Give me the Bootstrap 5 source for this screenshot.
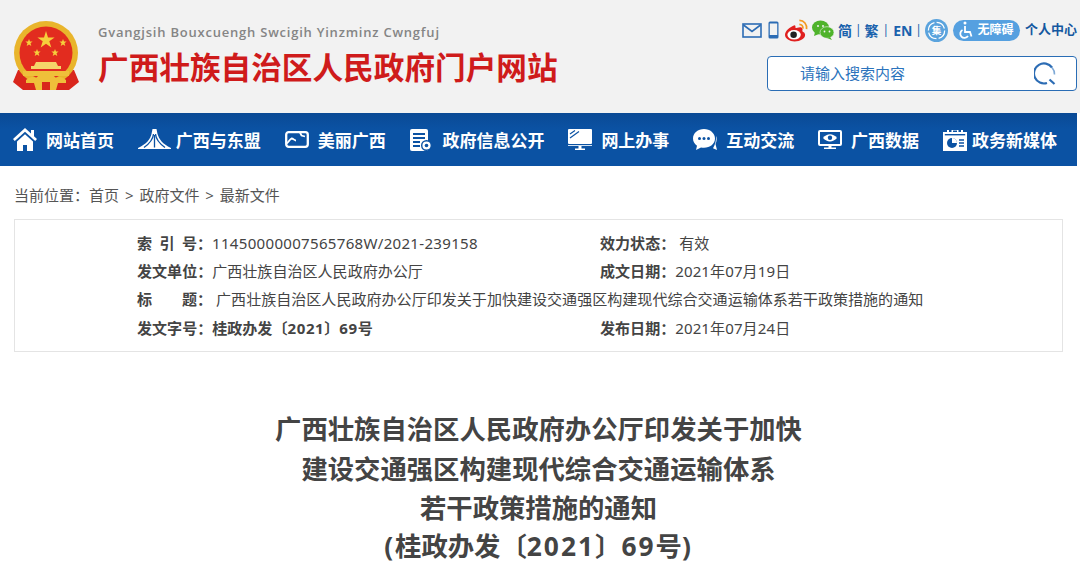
<!DOCTYPE html>
<html lang="zh-CN">
<head>
    <meta charset="UTF-8">
    <meta name="viewport" content="width=device-width, initial-scale=1.0">
    <title>广西壮族自治区人民政府门户网站</title>
    <link href="https://cdn.jsdelivr.net/npm/bootstrap@5.3.0/dist/css/bootstrap.min.css" rel="stylesheet">
    <style>
    body {
      font-family: "Noto Sans", "Noto Sans CJK SC", sans-serif;
      color: #444;
      overflow: hidden;
    }
    .site-head { height: 113px; background: #f2f2f2; padding: 18px 3px 0 13px; }
    .emblem { margin-top: 3px; }
    .brand-text { margin-left: 19px; padding-top: 5px; }
    .brand-sub { font-family: "Open Sans", sans-serif; font-size: 13px; line-height: 18px; letter-spacing: .78px; color: #858585; font-weight: 600; white-space: nowrap; }
    .brand-name { font-size: 30.65px; line-height: 44px; margin-top: 4px; font-weight: 700; color: #cf1b1b; white-space: nowrap; }
    .head-right { width: 310px; }
    .tool-row { height: 24px; margin-bottom: 14px; margin-left: -40px; color: #1a62ad; font-size: 14px; font-weight: 700; white-space: nowrap; }
    .tool-row > * { flex-shrink: 0; }
    .tool-mail { margin-right: 6px; }
    .tool-phone { margin-right: 6px; }
    .tool-weibo { margin-right: 4px; }
    .tool-wechat { margin-right: 4px; }
    .tool-sep { font-weight: 400; font-size: 12px; margin: 0 3px; }
    .tool-sep-wide { margin: 0 4px; }
    .access-pill { width: 67px; height: 21px; border-radius: 11px; background: #55a0e0; color: #fff; font-size: 12px; margin: 0 5px; }
    .tool-user { font-size: 13px; color: #1558a0; }
    .search-box { height: 35px; border: 1px solid #2a6db5; border-radius: 4px; background: #fff; padding: 0 19px 0 32px; color: #2b73bc; font-size: 15px; }
    .main-nav { height: 53px; margin-right: 3px; padding-left: 13px; gap: 23.85px; background: linear-gradient(#0a4a95, #0b52a3 30%); color: #fff; font-size: 17px; font-weight: 700; white-space: nowrap; }
    .main-nav span { padding-top: 3px; }
    .nav-ico { margin-right: 9px; }
    .nav-ico-tight { margin-right: 5px; }
    .crumbs { font-size: 15px; line-height: 22px; margin: 18px 0 13px 14px; color: #555; }
    .crumbs span { margin: 0 2px; }
    .crumbs span:first-child { margin-left: 0; }
    .info-box { margin: 0 17px 0 14px; height: 133px; padding: 9px 0 0 122px; border: 1px solid #e4e4e4; font-size: 15.05px; }
    .info-row { height: 28.3px; }
    .info-col { width: 463px; }
    .info-label { font-weight: 700; color: #444; white-space: nowrap; }
    .label-spread { width: 60px; }
    .num-wide { letter-spacing: .3px; }
    .num-bold { letter-spacing: .6px; }
    .num-date { letter-spacing: .1px; }
    .doc-title { margin: 58px 3px 0 0; font-size: 26.35px; line-height: 39.6px; font-weight: 700; color: #444; }
    .doc-title-no { margin-top: -2px; }
    .title-num { letter-spacing: 2px; }
    </style>
</head>
<body>
    <header class="site-head d-flex justify-content-between">
        <div class="d-flex align-items-start">
            <svg class="emblem" width="66" height="70" viewBox="0 0 66 70">
                <path d="M5 49 L0 61 L10 69 H56 L66 61 L61 49 Z" fill="#d9261c"/>
                <circle cx="33" cy="32" r="32" fill="#e9b52c"/>
                <circle cx="33" cy="32" r="26.500" fill="#e22c1f"/>
                <path d="M33 10l2 6.400h6.600l-5.300 3.900 2 6.300-5.300-3.900-5.300 3.900 2-6.300-5.300-3.900H31z" fill="#f6cf3c"/>
                <path d="M16 18l1 2.600h2.600l-2.100 1.700.8 2.700-2.300-1.600-2.300 1.600.8-2.700-2.100-1.700H15zM50 18l1 2.600h2.600l-2.100 1.700.8 2.700-2.300-1.600-2.300 1.600.8-2.700-2.100-1.700H49zM24 28l1 2.600h2.600l-2.100 1.700.8 2.700-2.300-1.600-2.300 1.600.8-2.700-2.100-1.700H23zM42 28l1 2.600h2.600l-2.100 1.700.8 2.700-2.300-1.600-2.300 1.600.8-2.700-2.100-1.700H41z" fill="#f6cf3c"/>
                <path d="M23 41h20l2 4h3v3H18v-3h3z" fill="#f5d66a"/>
                <path d="M10 50h46v5H10z" fill="#efc03a"/>
                <path d="M13 59q5-5 10-2 4-5 10-3 6-2 10 3 5-3 10 2v3H45l-2 7H23l-2-7H13z" fill="#efc03a"/>
                <path d="M29 61h8v8h-8z" fill="#d9261c"/>
            </svg>
            <div class="brand-text">
                <div class="brand-sub">Gvangjsih Bouxcuengh Swcigih Yinzminz Cwngfuj</div>
                <div class="brand-name">广西壮族自治区人民政府门户网站</div>
            </div>
        </div>
        <div class="head-right d-flex flex-column">
            <div class="tool-row d-flex align-items-center justify-content-end">
                <svg class="tool-mail" width="20" height="15" viewBox="0 0 20 15" fill="none" stroke="#2c6cb4" stroke-width="1.600">
                    <rect x="1" y="1" width="18" height="13"/>
                    <path d="M1.500 2l8.500 6.500L18.500 2"/>
                </svg>
                <svg class="tool-phone" width="11" height="18" viewBox="0 0 11 18">
                    <rect x=".5" y=".5" width="10" height="17" rx="1.500" fill="#2c6cb4"/>
                    <rect x="1.800" y="2.500" width="7.400" height="11.500" fill="#f2f2f2"/>
                </svg>
                <svg class="tool-weibo" width="23" height="23" viewBox="0 0 24 23">
                    <path d="M10 6C5 8 0 12 0 16c0 4 5 7 10 7 6 0 11-3 11-7 0-3-3-3-3-4 1-2 0-4-2-4-2-.1-4 1-5 1 0-1 0-3-1-3z" fill="#e0201f"/>
                    <ellipse cx="9.500" cy="16" rx="7" ry="5" fill="#fff"/>
                    <circle cx="9" cy="16" r="3.400" fill="#222"/>
                    <path d="M15 1c5 0 8 4 7.500 9M15 5c2.500 0 4 2 3.700 4.500" fill="none" stroke="#f39a1f" stroke-width="1.800"/>
                </svg>
                <svg class="tool-wechat" width="22" height="20" viewBox="0 0 22 20">
                    <ellipse cx="8.500" cy="7.500" rx="8.500" ry="7" fill="#4fb32b"/>
                    <path d="M3 12l-1 4 5-2z" fill="#4fb32b"/>
                    <ellipse cx="15" cy="12.500" rx="7" ry="5.800" fill="#4fb32b" stroke="#f2f2f2" stroke-width=".6"/>
                    <path d="M18 17l2 3-5-2z" fill="#4fb32b"/>
                    <circle cx="6" cy="6" r="1" fill="#f2f2f2"/>
                    <circle cx="11" cy="6" r="1" fill="#f2f2f2"/>
                    <circle cx="12.500" cy="11.500" r=".9" fill="#f2f2f2"/>
                    <circle cx="17.500" cy="11.500" r=".9" fill="#f2f2f2"/>
                </svg>
                <span>简</span><span class="tool-sep">|</span><span>繁</span><span class="tool-sep tool-sep-wide">|</span><span>EN</span><span class="tool-sep">|</span>
                <svg width="23" height="23" viewBox="0 0 24 24">
                    <circle cx="12" cy="12" r="12" fill="#5aa3dd"/>
                    <circle cx="12" cy="12" r="8.500" fill="none" stroke="#fff" stroke-width="1.300" stroke-dasharray="11 2.300"/>
                    <text x="12" y="16" text-anchor="middle" font-size="10" font-weight="700" fill="#fff">集</text>
                </svg>
                <span class="access-pill d-inline-flex align-items-center justify-content-center gap-1">
                    <svg width="14" height="18" viewBox="0 0 14 18" fill="none" stroke="#fff" stroke-width="1.800">
                        <circle cx="6" cy="2" r="1.500" fill="#fff" stroke="none"/>
                        <path d="M6 5v6h5l1.500 4.500"/>
                        <path d="M3.500 9a4.200 4.200 0 1 0 5.500 6"/>
                    </svg>无障碍</span>
                <span class="tool-user">个人中心</span>
            </div>
            <div class="search-box d-flex align-items-center justify-content-between">
                <span>请输入搜索内容</span>
                <svg width="23" height="24" viewBox="0 0 23 24" fill="none" stroke="#2c6cb4" stroke-width="2.200">
                    <path d="M18 5.500A10 10 0 1 0 13 21"/>
                    <path d="M18 5.500a10 10 0 0 1 2.500 7" stroke="#7fa9d6" stroke-width="1.600"/>
                    <path d="M15.500 17.500l5 4.500"/>
                </svg>
            </div>
        </div>
    </header>

    <nav class="main-nav d-flex align-items-center">
        <div class="d-flex align-items-center">
            <svg class="nav-ico" width="24" height="23" viewBox="0 0 24 23" fill="#fff">
                <path d="M12 0L0 11l1.800 2L12 3.800 22.200 13 24 11l-3-2.700V2h-3v3.600z"/>
                <path d="M12 6.200L4 13.400V23h6v-6h4v6h6v-9.600z"/>
            </svg>
            <span>网站首页</span>
        </div>
        <div class="d-flex align-items-center">
            <svg class="nav-ico-tight" width="33" height="21" viewBox="0 0 33 21" fill="#fff">
                <path d="M14.500 0h4l1 5c1.500 5 5 10 13.500 14v1H0v-1C8.500 15 12.500 10 13.500 5z"/>
                <path d="M15.500 5C15 10 11 15 6 18.500M17.500 5C18 10 22 15 27 18.500M16.500 6v12.500" fill="none" stroke="#0b52a3" stroke-width="1.300"/>
            </svg>
            <span>广西与东盟</span>
        </div>
        <div class="d-flex align-items-center">
            <svg class="nav-ico" width="24" height="17" viewBox="0 0 24 17" fill="none" stroke="#fff" stroke-width="2.300">
                <rect x="1.200" y="1.200" width="21.600" height="14.600" rx="2.500"/>
                <path d="M1.500 12.500c2-1 3-4 5-5 2 0 3 2 4.500 2M15 1.500l1.500 3 3.500 1" stroke-width="1.800"/>
            </svg>
            <span>美丽广西</span>
        </div>
        <div class="d-flex align-items-center">
            <svg class="nav-ico" width="24" height="22" viewBox="0 0 24 22">
                <path d="M2 0h14a2 2 0 0 1 2 2v20H2a2 2 0 0 1-2-2V2a2 2 0 0 1 2-2z" fill="#fff"/>
                <path d="M3 5h12M3 9h12M3 13h7M3 17h7" stroke="#0b52a3" stroke-width="1.800"/>
                <circle cx="16.500" cy="16.500" r="4.800" fill="#fff" stroke="#0b52a3" stroke-width="1.400"/>
                <circle cx="16.500" cy="16.500" r="1.800" fill="#0b52a3"/>
            </svg>
            <span>政府信息公开</span>
        </div>
        <div class="d-flex align-items-center">
            <svg class="nav-ico" width="24" height="21" viewBox="0 0 24 21">
                <rect x="0" y="0" width="24" height="15" rx="1" fill="#fff"/>
                <path d="M2 5l5-3.500M2 9l9-6.500" stroke="#0b52a3" stroke-width="1.200"/>
                <path d="M0 16h24v1H0z" fill="#cfe0f2"/>
                <path d="M10.500 17h3v2.500h-3zM7 19.500h10V21H7z" fill="#fff"/>
            </svg>
            <span>网上办事</span>
        </div>
        <div class="d-flex align-items-center">
            <svg class="nav-ico" width="24" height="22" viewBox="0 0 24 22" fill="#fff">
                <path d="M11 0C5 0 0 4 0 9.500c0 3 1.500 5.500 4 7.200L3 21l5-2.500c1 .2 2 .3 3 .3 6 0 11-4 11-9.300S17 0 11 0z"/>
                <path d="M23 7c1 1.500 1 5-.5 8 .5 2 1 4 1.500 6l-4-1.800C22 16 23.500 11 23 7z"/>
                <circle cx="6.500" cy="9.500" r="1.500" fill="#0b52a3"/>
                <circle cx="11" cy="9.500" r="1.500" fill="#0b52a3"/>
                <circle cx="15.500" cy="9.500" r="1.500" fill="#0b52a3"/>
            </svg>
            <span>互动交流</span>
        </div>
        <div class="d-flex align-items-center">
            <svg class="nav-ico" width="24" height="20" viewBox="0 0 24 20">
                <rect x="1" y="1" width="22" height="14" rx="1" fill="none" stroke="#fff" stroke-width="2"/>
                <path d="M5 8c4-5 10-5 14 0-4 4.500-10 4.500-14 0z" fill="#fff"/>
                <circle cx="12" cy="7.800" r="2.200" fill="#0b52a3"/>
                <path d="M10.500 15h3v2.500h-3zM6 17.500h12V19H6z" fill="#fff"/>
            </svg>
            <span>广西数据</span>
        </div>
        <div class="d-flex align-items-center">
            <svg class="nav-ico-tight" width="24" height="22" viewBox="0 0 24 22">
                <path d="M0 3h4V1h2v2h2.500V1h7v2H18V1h2v2h4v19H0z" fill="#fff"/>
                <path d="M10 1.500h4v1.500h-4z" fill="#0b52a3"/>
                <rect x="1.800" y="5" width="20.400" height="1.400" fill="#0b52a3"/>
                <circle cx="9" cy="14" r="5" fill="#0b52a3"/>
                <path d="M9 14V9a5 5 0 0 1 5 5z" fill="#fff"/>
                <path d="M16 11h5M16 14h5M16 17h5" stroke="#0b52a3" stroke-width="1.400"/>
            </svg>
            <span>政务新媒体</span>
        </div>
    </nav>

    <div class="crumbs">当前位置：<span>首页</span> &gt; <span>政府文件</span> &gt; <span>最新文件</span></div>

    <section class="info-box">
        <div class="info-row d-flex align-items-center">
            <div class="info-col d-flex align-items-center">
                <span class="info-label d-inline-flex"><span class="label-spread d-inline-flex justify-content-between"><span>索</span><span>引</span><span>号</span></span>：</span>
                <span class="num-wide">11450000007565768W/2021-239158</span>
            </div>
            <div class="d-flex align-items-center"><span class="info-label">效力状态：</span><span class="ms-1">有效</span></div>
        </div>
        <div class="info-row d-flex align-items-center">
            <div class="info-col d-flex align-items-center"><span class="info-label">发文单位：</span><span>广西壮族自治区人民政府办公厅</span></div>
            <div class="d-flex align-items-center"><span class="info-label">成文日期：</span><span class="num-date">2021年07月19日</span></div>
        </div>
        <div class="info-row d-flex align-items-center">
            <span class="info-label d-inline-flex"><span class="label-spread d-inline-flex justify-content-between"><span>标</span><span>题</span></span>：</span>
            <span class="ms-1">广西壮族自治区人民政府办公厅印发关于加快建设交通强区构建现代综合交通运输体系若干政策措施的通知</span>
        </div>
        <div class="info-row d-flex align-items-center">
            <div class="info-col d-flex align-items-center"><span class="info-label">发文字号：</span><span class="fw-bold">桂政办发〔<span class="num-bold">2021</span>〕<span class="num-bold">69</span>号</span></div>
            <div class="d-flex align-items-center"><span class="info-label">发布日期：</span><span class="num-date">2021年07月24日</span></div>
        </div>
    </section>

    <h1 class="doc-title text-center">广西壮族自治区人民政府办公厅印发关于加快<br>建设交通强区构建现代综合交通运输体系<br>若干政策措施的通知<span class="doc-title-no d-block"><span class="title-num">(</span>桂政办发〔<span class="title-num">2021</span>〕<span class="title-num">69</span>号<span class="title-num">)</span></span></h1>

    <script src="https://cdn.jsdelivr.net/npm/bootstrap@5.3.0/dist/js/bootstrap.bundle.min.js"></script>
</body>
</html>
